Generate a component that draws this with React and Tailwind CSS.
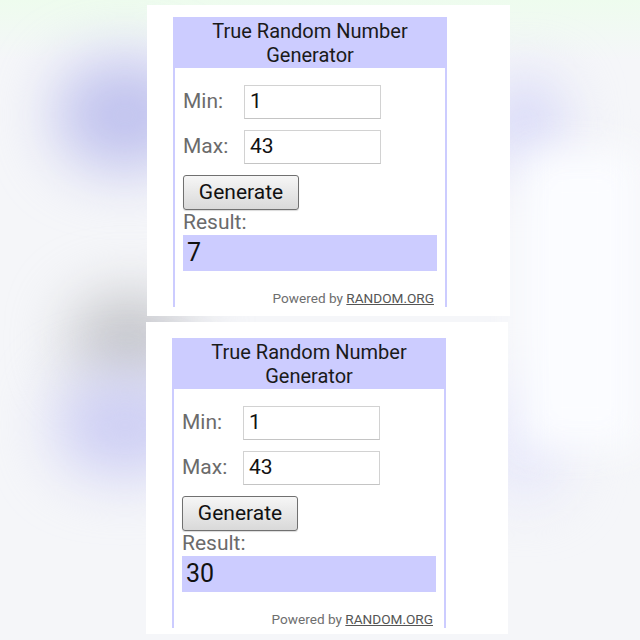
import React from 'react';

const Field = ({ label, value }) => (
  <div className="flex items-center h-[34px]">
    <span className="w-[61px] text-[21px] text-[#6b6b6b]">{label}</span>
    <div className="w-[137px] h-[34px] border border-[#d2d2d2] border-b-[#c4c4c4] flex items-center pl-[5px] text-[21px] text-[#111]">
      {value}
    </div>
  </div>
);

const Widget = ({ result }) => (
  <div className="w-[274px] h-[290px] border-x-2 border-t-2 border-[#ccccff] flex flex-col">
    {/* Header */}
    <div className="bg-[#ccccff] h-[51px] -mx-[2px] -mt-[2px] pt-[2px] text-center text-[20px] leading-[24px] text-[#1a1a1a]">
      True Random Number
      <br />
      Generator
    </div>

    <div className="px-[8px] flex flex-col">
      <div className="mt-[17px]">
        <Field label="Min:" value="1" />
      </div>
      <div className="mt-[11px]">
        <Field label="Max:" value="43" />
      </div>

      <button className="mt-[11px] w-[116px] h-[35px] rounded-[3px] border border-[#707070] bg-gradient-to-b from-[#f6f6f6] to-[#d9d9d9] text-[21px] text-[#111] shadow-[0_1px_1px_rgba(0,0,0,0.15)]">
        Generate
      </button>

      <div className="text-[21px] leading-[24px] text-[#6b6b6b]">Result:</div>
      <div className="mt-[1px] h-[36px] bg-[#ccccff] flex items-center px-[4px] text-[25px] text-[#111]">
        {result}
      </div>

      <div className="mt-[19px] pr-[3px] text-right text-[13.6px] leading-[16px] text-[#6e6e6e]">
        Powered by <span className="underline text-[#555] decoration-[#555]">RANDOM.ORG</span>
      </div>
    </div>
  </div>
);

export default function App() {
  return (
    <div className="relative w-[640px] h-[640px] overflow-hidden bg-[#f5f6f9] font-['Roboto',sans-serif]">
      {/* blurred backdrop */}
      <div className="absolute inset-x-0 top-0 h-[60px] bg-gradient-to-b from-[#eefcee] to-transparent" />
      <div className="absolute left-[55px] top-[60px] w-[140px] h-[110px] rounded-full bg-[#c0c2ee] blur-[30px]" />
      <div className="absolute left-[70px] top-[295px] w-[120px] h-[90px] rounded-full bg-[#c4c5c9] blur-[30px]" />
      <div className="absolute left-[55px] top-[375px] w-[140px] h-[100px] rounded-full bg-[#cdcef4] blur-[30px]" />
      <div className="absolute left-[485px] top-[75px] w-[80px] h-[100px] rounded-full bg-[#d9daf8] blur-[28px]" />
      <div className="absolute left-[485px] top-[380px] w-[80px] h-[120px] rounded-full bg-[#e6e7fa] blur-[28px]" />
      <div className="absolute right-0 top-[150px] w-[120px] h-[300px] bg-[#fbfcff] blur-[20px]" />

      <div className="relative flex flex-col pt-[5px] gap-[6px]">
        <div className="ml-[147px] w-[363px] h-[311px] bg-white pt-[12px] pl-[26px]">
          <Widget result="7" />
        </div>
        <div className="ml-[146px] w-[362px] h-[312px] bg-white pt-[16px] pl-[26px]">
          <Widget result="30" />
        </div>
      </div>
    </div>
  );
}
